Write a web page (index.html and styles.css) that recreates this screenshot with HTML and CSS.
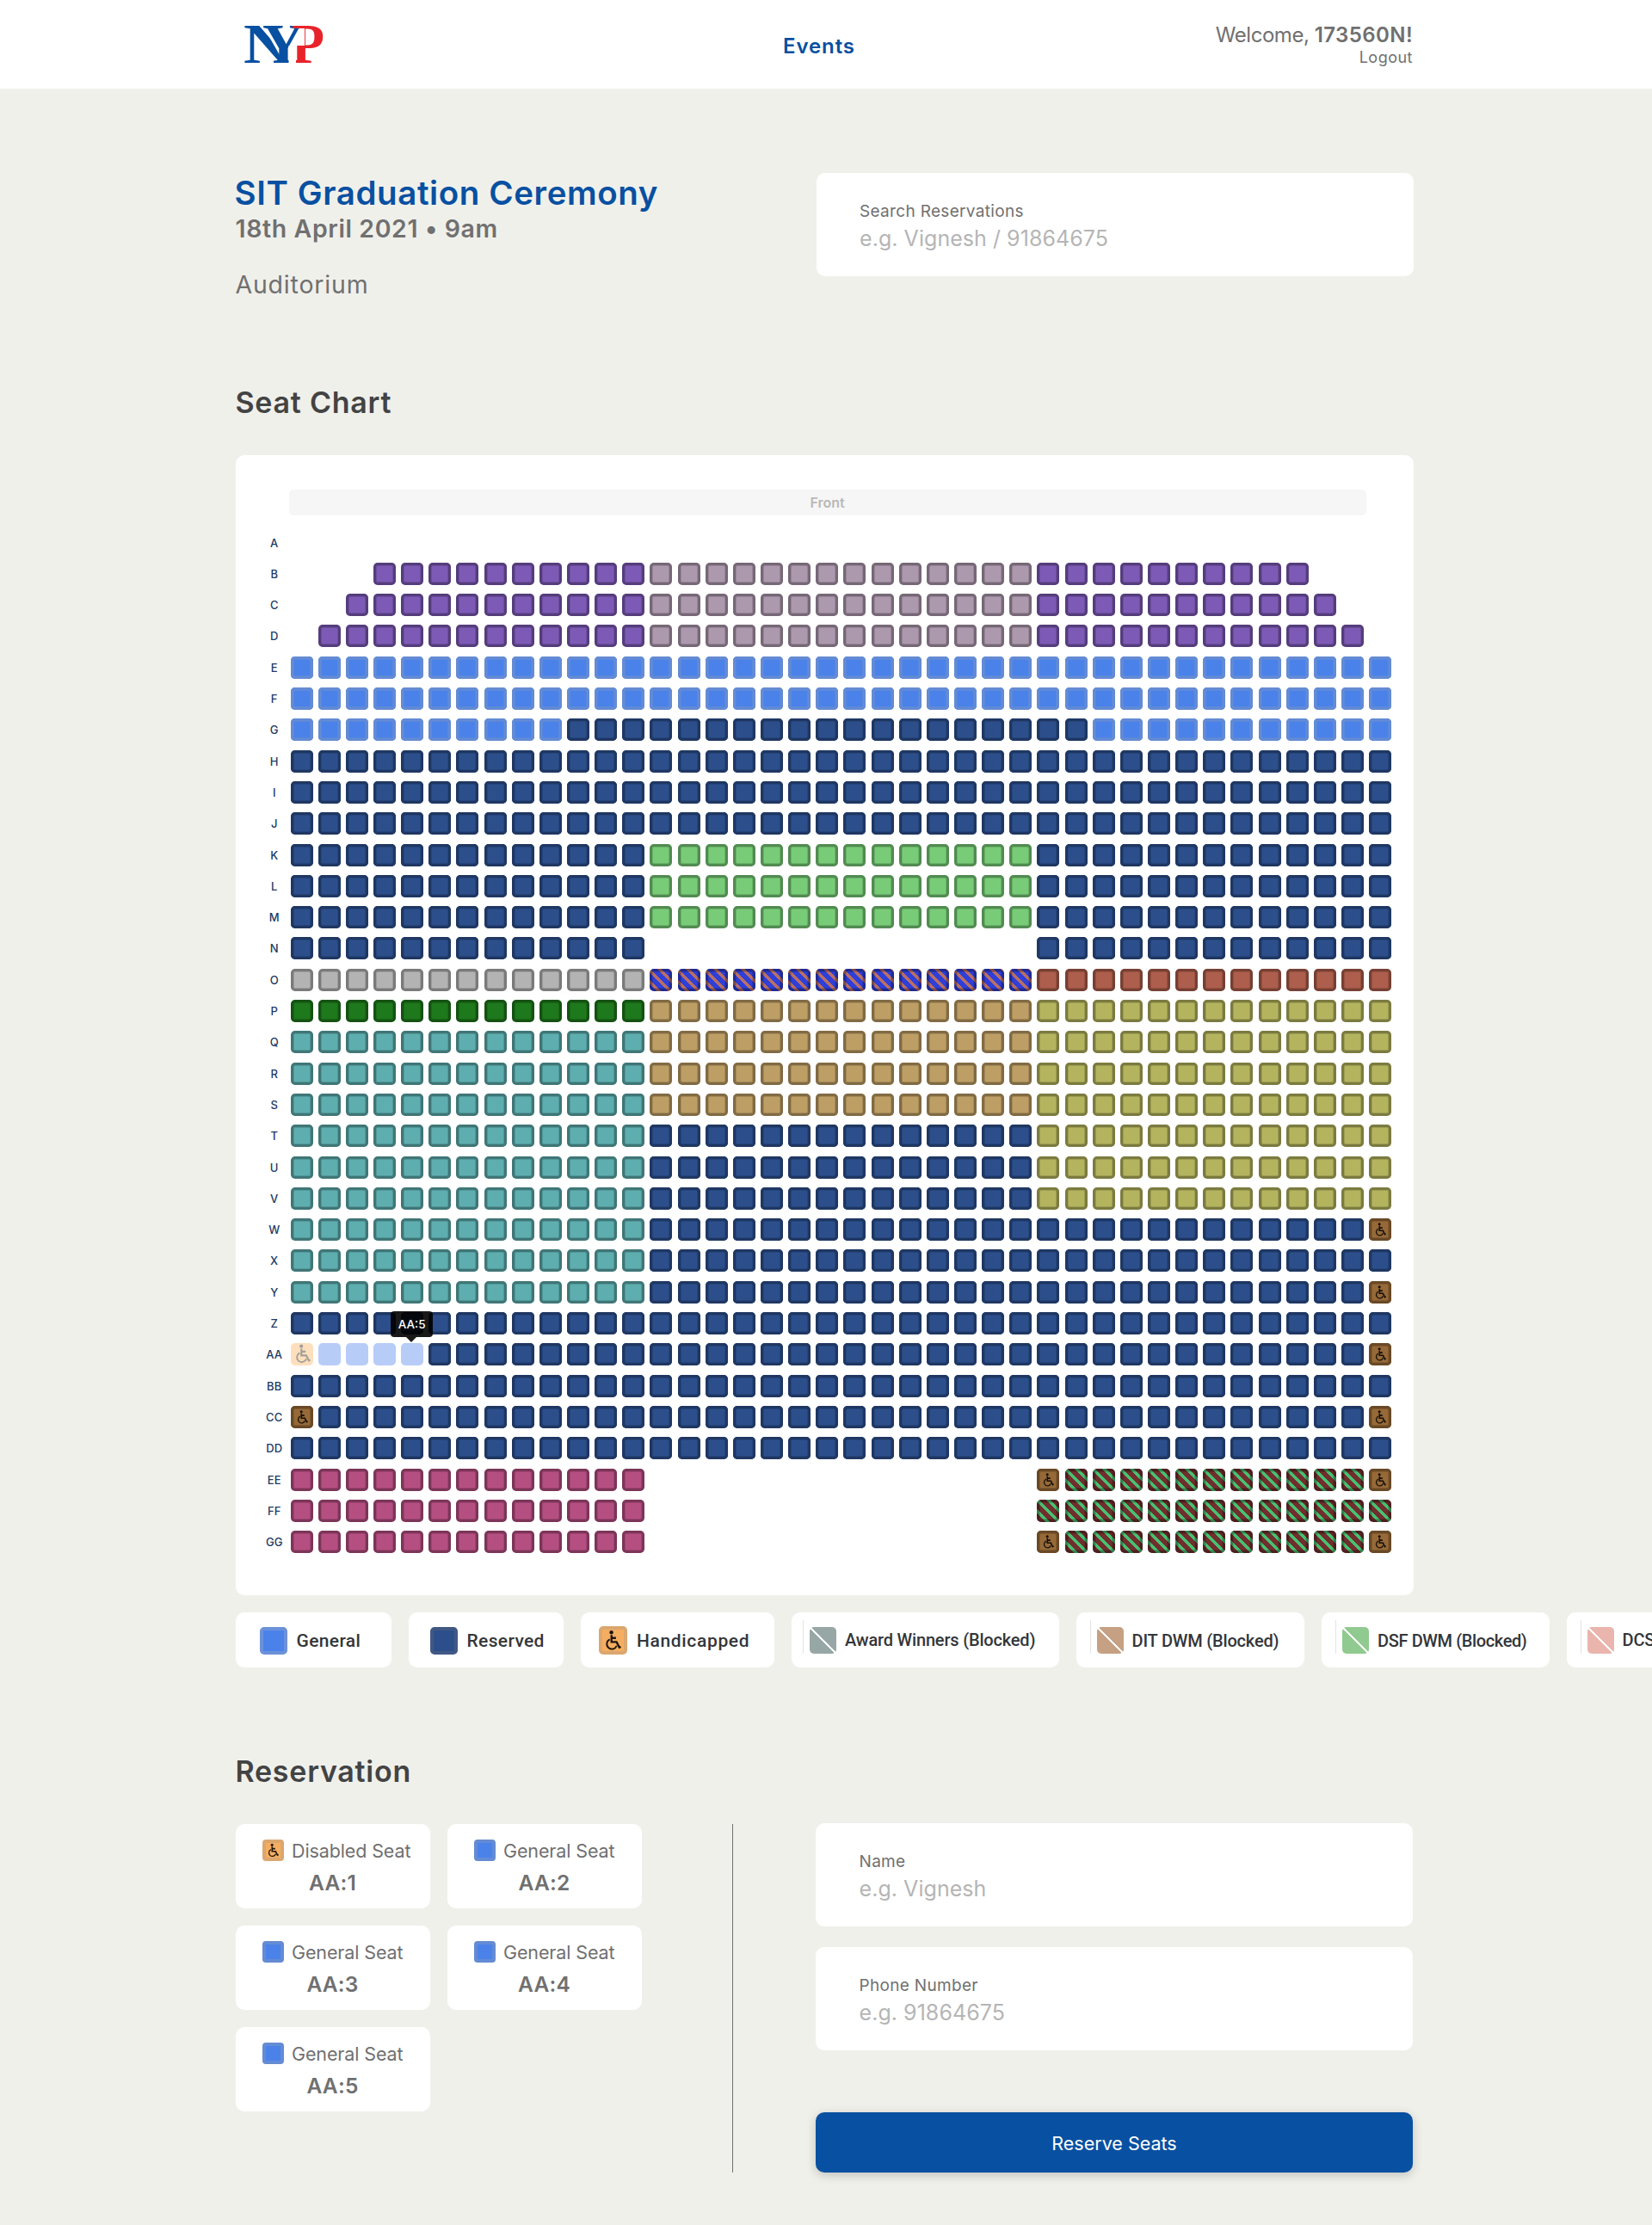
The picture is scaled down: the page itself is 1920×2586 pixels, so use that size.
FILE: index.html
```html
<!DOCTYPE html>
<html lang="en">
<head>
<meta charset="utf-8">
<title>SIT Graduation Ceremony – Seats</title>
<link rel="stylesheet" href="styles.css">
</head>
<body>
<svg class="defs" aria-hidden="true">
  <symbol id="wheelchair" viewBox="0 0 18 22">
    <circle cx="7.2" cy="2.2" r="2.1" fill="currentColor"/>
    <path d="M7.3 5v7.8h5.6l3 6 1.6-.8M7.5 8.4h4.7" fill="none" stroke="currentColor" stroke-width="2.2"/>
    <path d="M5.4 9.9a5.6 5.6 0 1 0 7.6 7" fill="none" stroke="currentColor" stroke-width="1.8"/>
  </symbol>
</svg>

<header class="topbar">
  <div class="topbar-inner">
    <svg class="logo" viewBox="0 0 92 44" role="img" aria-label="NYP">
      <defs>
        <clipPath id="n-cut"><path d="M0 0h21L45 42v2H0z"/></clipPath>
        <clipPath id="y-cut"><path d="M20 0h48v24H51.500v20H34V30z"/></clipPath>
        <clipPath id="p-cut"><path d="M56 0h36v44H60V24h10V4H56z"/></clipPath>
      </defs>
      <g font-family="Liberation Serif, serif" font-weight="700" font-size="66">
        <text x="-1" y="43.500" textLength="54" lengthAdjust="spacingAndGlyphs" fill="#0850a1" clip-path="url(#n-cut)">N</text>
        <text x="21" y="43.500" textLength="48" lengthAdjust="spacingAndGlyphs" fill="#0850a1" clip-path="url(#y-cut)">Y</text>
        <text x="55" y="43.500" textLength="38" lengthAdjust="spacingAndGlyphs" fill="#e8232a" clip-path="url(#p-cut)">P</text>
      </g>
    </svg>
    <a class="nav-link">Events</a>
    <div class="account">
      <div class="welcome">Welcome, <b>173560N!</b></div>
      <a class="logout">Logout</a>
    </div>
  </div>
</header>

<main class="page">
  <section class="hero">
    <div>
      <h1 class="event-title">SIT Graduation Ceremony</h1>
      <p class="event-date">18th April 2021 • 9am</p>
      <p class="event-venue">Auditorium</p>
    </div>
    <label class="field">
      <span class="field-label">Search Reservations</span>
      <input class="field-input" placeholder="e.g. Vignesh / 91864675">
    </label>
  </section>

  <h2 class="section-title chart-title">Seat Chart</h2>
  <section class="chart">
    <div class="front">Front</div>
    <div class="rows" id="rows"></div>
  </section>

  <ul class="legend">
    <li class="key key-general"><i class="swatch general"></i>General</li>
    <li class="key key-reserved"><i class="swatch reserved"></i>Reserved</li>
    <li class="key key-handicapped"><i class="swatch handicap"><svg><use href="#wheelchair"/></svg></i>Handicapped</li>
    <li class="key key-award"><i class="swatch blocked award"></i>Award Winners (Blocked)</li>
    <li class="key key-dit"><i class="swatch blocked dit"></i>DIT DWM (Blocked)</li>
    <li class="key key-dsf"><i class="swatch blocked dsf"></i>DSF DWM (Blocked)</li>
    <li class="key key-dcs"><i class="swatch blocked dcs"></i>DCS</li>
  </ul>

  <h2 class="section-title reservation-title">Reservation</h2>
  <section class="reservation">
    <div class="tickets">
      <div class="ticket"><div class="ticket-type"><i class="chip handicap"><svg><use href="#wheelchair"/></svg></i>Disabled Seat</div><b>AA:1</b></div>
      <div class="ticket"><div class="ticket-type"><i class="chip general"></i>General Seat</div><b>AA:2</b></div>
      <div class="ticket"><div class="ticket-type"><i class="chip general"></i>General Seat</div><b>AA:3</b></div>
      <div class="ticket"><div class="ticket-type"><i class="chip general"></i>General Seat</div><b>AA:4</b></div>
      <div class="ticket"><div class="ticket-type"><i class="chip general"></i>General Seat</div><b>AA:5</b></div>
    </div>
    <form class="form">
      <label class="field">
        <span class="field-label">Name</span>
        <input class="field-input" placeholder="e.g. Vignesh">
      </label>
      <label class="field">
        <span class="field-label">Phone Number</span>
        <input class="field-input" placeholder="e.g. 91864675">
      </label>
      <button class="submit" type="button">Reserve Seats</button>
    </form>
  </section>
</main>
<script src="seats.js"></script>
</body>
</html>
```
FILE: seats.js
```js
// Each row is a list of [seat kind, count] runs covering 40 columns.
const all = [['reserved', 40]];
const green = [['reserved', 13], ['green', 14], ['reserved', 13]];
const mid = [['teal', 13], ['tan', 14], ['olive', 13]];
const upper = [['teal', 13], ['reserved', 14], ['olive', 13]];
const stripedEnd = [['pink', 13], ['empty', 14], ['access', 1], ['maroon-stripe', 11], ['access', 1]];

const plan = [
  ['A', [['empty', 40]]],
  ['B', [['empty', 3], ['purple', 10], ['mauve', 14], ['purple', 10], ['empty', 3]]],
  ['C', [['empty', 2], ['purple', 11], ['mauve', 14], ['purple', 11], ['empty', 2]]],
  ['D', [['empty', 1], ['purple', 12], ['mauve', 14], ['purple', 12], ['empty', 1]]],
  ['E', [['general', 40]]],
  ['F', [['general', 40]]],
  ['G', [['general', 10], ['reserved', 19], ['general', 11]]],
  ['H', all], ['I', all], ['J', all],
  ['K', green], ['L', green], ['M', green],
  ['N', [['reserved', 13], ['empty', 14], ['reserved', 13]]],
  ['O', [['gray', 13], ['blue-stripe', 14], ['brick', 13]]],
  ['P', [['forest', 13], ['tan', 14], ['olive', 13]]],
  ['Q', mid], ['R', mid], ['S', mid],
  ['T', upper], ['U', upper], ['V', upper],
  ['W', [['teal', 13], ['reserved', 26], ['access', 1]]],
  ['X', [['teal', 13], ['reserved', 27]]],
  ['Y', [['teal', 13], ['reserved', 26], ['access', 1]]],
  ['Z', all],
  ['AA', [['access-picked', 1], ['picked', 4], ['reserved', 34], ['access', 1]]],
  ['BB', all],
  ['CC', [['access', 1], ['reserved', 38], ['access', 1]]],
  ['DD', all],
  ['EE', stripedEnd],
  ['FF', [['pink', 13], ['empty', 14], ['maroon-stripe', 13]]],
  ['GG', stripedEnd],
];

const icon = '<svg><use href="#wheelchair"/></svg>';
document.getElementById('rows').innerHTML = plan.map(([name, runs]) => {
  let col = 0;
  const seats = runs.map(([kind, count]) => {
    let out = '';
    for (let i = 0; i < count; i++) {
      col += 1;
      const tip = name === 'AA' && col === 5 ? '<span class="tip">AA:5</span>' : '';
      out += `<i class="seat ${kind}">${kind.startsWith('access') ? icon : ''}${tip}</i>`;
    }
    return out;
  }).join('');
  return `<div class="row"><span class="row-name">${name}</span>${seats}</div>`;
}).join('');
```
FILE: styles.css
```css
* { box-sizing: border-box; }

body {
  margin: 0;
  height: 2586px;
  overflow: hidden;
  background: #f0f0eb;
  color: #707070;
  font-family: Inter, "Liberation Sans", sans-serif;
}

h1, h2, p, ul { margin: 0; padding: 0; }
.defs { display: block; width: 0; height: 0; }

/* Header */
.topbar { height: 103px; background: #fff; }
.topbar-inner {
  display: grid;
  grid-template-columns: 626px auto 1fr;
  width: 1358px;
  margin-left: 284px;
}
.logo { width: 92px; height: 44px; margin-top: 29px; overflow: visible; }
.nav-link {
  margin-top: 40px;
  font-size: 24px;
  line-height: 28px;
  font-weight: 600;
  letter-spacing: .9px;
  color: #0850a1;
}
.account { text-align: right; padding-top: 27px; }
.welcome { font-size: 24px; line-height: 28px; letter-spacing: -.45px; }
.welcome b { font-weight: 600; letter-spacing: .4px; }
.logout { display: block; margin-top: 1px; font-size: 18px; line-height: 22px; letter-spacing: .5px; }

.page { margin-left: 273.5px; }

/* Event summary and search */
.hero {
  display: flex;
  justify-content: space-between;
  width: 1369px;
  height: 246px;
  padding-top: 98px;
}
.event-title {
  font-size: 38.5px;
  line-height: 46px;
  font-weight: 600;
  letter-spacing: .6px;
  color: #0850a1;
  margin-left: -1px;
}
.event-date { margin-top: 1px; font-size: 28.5px; line-height: 36px; font-weight: 600; letter-spacing: .6px; }
.event-venue { margin-top: 29px; font-size: 28.5px; line-height: 36px; letter-spacing: .8px; }

.field {
  display: block;
  width: 694px;
  height: 120px;
  padding: 33px 50.500px 0;
  border-radius: 10px;
  background: #fff;
}
.field-label { display: block; font-size: 19px; line-height: 24px; letter-spacing: .32px; }
.field-input {
  display: block;
  width: 100%;
  height: 30px;
  margin-top: 4px;
  padding: 0;
  border: 0;
  outline: 0;
  background: none;
  font: 25px/30px Inter, "Liberation Sans", sans-serif;
  letter-spacing: .05px;
}
.field-input::placeholder { color: #b5b5b5; opacity: 1; }

.section-title {
  font-size: 34px;
  line-height: 42px;
  font-weight: 600;
  letter-spacing: .75px;
  color: #434343;
}
.chart-title { margin-top: 98px; }
.reservation-title { margin-top: 100px; }

/* Seat chart */
.chart {
  width: 1369px;
  height: 1325px;
  margin-top: 40px;
  padding-top: 40px;
  border-radius: 10px;
  background: #fff;
}
.front {
  width: 1252px;
  height: 30px;
  margin-left: 62px;
  border-radius: 5px;
  background: #f6f6f6;
  color: #b8b8b8;
  font-size: 16px;
  line-height: 30px;
  font-weight: 600;
  text-align: center;
}
.rows { margin: 18.600px 0 0 26.5px; }
.row {
  display: grid;
  grid-template-columns: 37.6px repeat(40, 26px);
  column-gap: 6.144px;
  height: 36.3px;
  margin-left: -6.144px;
}
.row-name {
  font-size: 13px;
  line-height: 26px;
  font-weight: 500;
  text-align: center;
  white-space: nowrap;
  padding-left: 12px;
  color: #223a63;
}
.seat, .swatch, .chip { display: block; position: relative; }
.seat {
  width: 26px;
  height: 26px;
  border-radius: 5px;
  background: var(--fill);
  box-shadow: inset 0 0 0 3px var(--ring, rgba(0, 0, 0, .22)), inset 0 0 0 4px rgba(0, 0, 0, .12);
}
.empty { visibility: hidden; }
.purple { --fill: #7d5ab5; }
.mauve { --fill: #ad99ae; }
.general { --fill: #4a82ea; --ring: #648bd3; }
.reserved { --fill: #2c4f8c; --ring: #1f3762; }
.green { --fill: #78cc78; }
.gray { --fill: #b3b3b3; }
.forest { --fill: #1e781c; }
.teal { --fill: #5eaeaf; }
.tan { --fill: #bd9e65; }
.olive { --fill: #b4b45f; }
.brick { --fill: #ad5e4c; }
.pink { --fill: #b54f81; }
.access { --fill: #966937; --ring: #694926; color: #15100a; }
.handicap { --fill: #f5ae61; --ring: #dba76f; color: #1c150c; }
.seat.general { box-shadow: inset 0 0 0 3px #648bd3, inset 0 0 0 4px #5a88dc; }
.blue-stripe { --fill: repeating-linear-gradient(45deg, #2f3fd8 0 6px, #b86f68 6px 9.2px); }
.maroon-stripe { --fill: repeating-linear-gradient(45deg, #48c070 0 1.7px, #702e2e 1.7px 7.5px, #48c070 7.5px 9.2px); }
.picked { --fill: #b7ccf7; }
.access-picked { --fill: #fddfbd; color: #a3a099; }
.seat.picked, .seat.access-picked { box-shadow: none; }
.seat.access, .seat.access-picked { display: flow-root; }
.seat svg { display: block; width: 13px; height: 16px; margin: 5px 0 0 7px; }
.seat.access-picked svg { width: 18px; height: 23px; margin: 1px 0 0 5px; }

.tip {
  position: absolute;
  left: -12px;
  bottom: 33px;
  z-index: 2;
  width: 49px;
  height: 30px;
  border-radius: 4px;
  background: rgba(0, 0, 0, .9);
  color: #fff;
  font-size: 13.5px;
  line-height: 30px;
  font-weight: 500;
  font-style: normal;
  text-align: center;
}
.tip::after {
  content: "";
  position: absolute;
  left: 18px;
  top: 30px;
  border: 6.5px solid transparent;
  border-top-color: rgba(0, 0, 0, .9);
  border-bottom: 0;
}

/* Legend */
.legend {
  display: flex;
  gap: 20px;
  margin-top: 20px;
  list-style: none;
  overflow: hidden;
}
.key {
  display: flex;
  flex: none;
  align-items: center;
  gap: 11px;
  height: 64px;
  padding-top: 1px;
  border-radius: 10px;
  background: #fff;
  color: #33363a;
  font: 500 21px/26px Roboto, "Liberation Sans", sans-serif;
  letter-spacing: .35px;
  white-space: nowrap;
}
.key-general { width: 181px; padding-left: 28px; }
.key-reserved { width: 180px; padding-left: 25px; }
.key-handicapped { width: 225px; padding-left: 21.5px; letter-spacing: .65px; }
.key-award, .key-dit, .key-dsf, .key-dcs { font-size: 20px; gap: 10px; letter-spacing: -.18px; }
.key-award { width: 311px; padding-left: 21.5px; padding-top: 0; }
.key-dit { width: 265px; padding-left: 24px; }
.key-dsf { width: 265px; padding-left: 24.5px; letter-spacing: -.38px; }
.key-dcs { width: 265px; padding-left: 24px; padding-top: 0; }

.swatch {
  width: 32px;
  height: 32px;
  border-radius: 5px;
  background: var(--fill);
  border: 4px solid var(--ring);
}
.swatch.general { --ring: #6c91d8; }
.swatch.reserved { --ring: #415884; }
.swatch.handicap { width: 33px; height: 33px; }
.swatch svg { display: block; width: 19px; height: 25px; margin: 0 0 0 3px; }
.swatch.blocked {
  width: 31px;
  height: 31px;
  border-color: rgba(255, 255, 255, .2);
  background: linear-gradient(to top right, transparent 47%, #fff 47% 53%, transparent 53%) border-box, var(--fill) border-box;
}
.swatch.blocked::before {
  content: "";
  position: absolute;
  left: -8px;
  top: -8px;
  width: 1px;
  height: 39px;
  background: #e4e4e4;
}
.award { --fill: #97a7a6; }
.dit { --fill: #c5a083; }
.dsf { --fill: #90ca90; }
.dcs { --fill: #eab5ac; }

/* Reservation */
.reservation { display: flex; width: 1369px; height: 406px; margin-top: 39px; }
.tickets {
  display: grid;
  grid-template-columns: 226px 226px;
  grid-auto-rows: 98px;
  gap: 20px;
  width: 578.500px;
  height: 405px;
  margin-top: 1px;
  border-right: 1px solid #707070;
}
.ticket { padding-top: 18px; border-radius: 10px; background: #fff; text-align: center; }
.ticket-type {
  display: flex;
  gap: 9px;
  height: 26px;
  padding-left: 31.5px;
  font-size: 21.5px;
  line-height: 26px;
  letter-spacing: -.12px;
  white-space: nowrap;
}
.ticket b {
  display: block;
  margin-top: 9px;
  font-size: 24.5px;
  line-height: 30px;
  font-weight: 600;
  letter-spacing: .2px;
}
.chip {
  flex: none;
  width: 25px;
  height: 25px;
  border-radius: 4px;
  background: var(--fill);
  border: 4px solid var(--ring);
}
.chip svg { display: block; width: 13px; height: 17px; margin: 0 0 0 2px; }

.form { display: flex; flex-direction: column; gap: 24px; margin-left: 96px; }
.submit {
  width: 694px;
  height: 70px;
  margin-top: 48px;
  border: 0;
  border-radius: 10px;
  background: #0850a1;
  box-shadow: 0 3px 12px rgba(0, 0, 0, .2);
  color: #fff;
  padding-top: 3px;
  font: 21.5px/26px Inter, "Liberation Sans", sans-serif;
}
```
